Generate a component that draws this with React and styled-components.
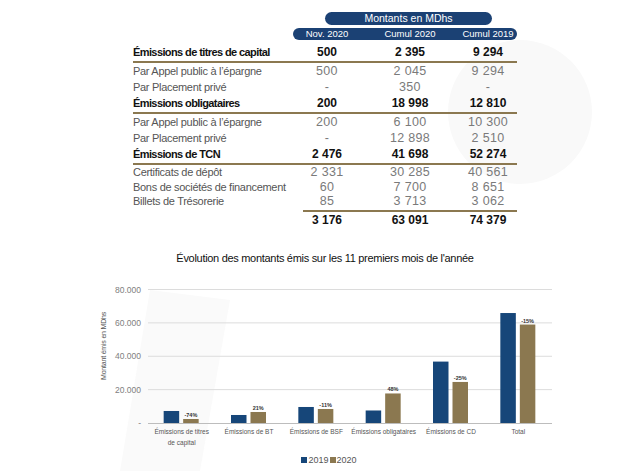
import React from 'react';
import styled, { createGlobalStyle } from 'styled-components';

// Couleurs de la charte
const NAVY = '#1b4174';
const BAR_BLUE = '#164679';
const GOLD = '#8b7850';

const SANS = '"Liberation Sans", Arial, sans-serif';

const GlobalStyle = createGlobalStyle`
  html, body {
    margin: 0;
    padding: 0;
    background: #fff;
  }
  body {
    font-family: ${SANS};
  }
`;

const Page = styled.div`
  position: relative;
  width: 641px;
  height: 471px;
  overflow: hidden;
  background: #fff;
`;

// Filigrane du logo en fond
const Watermark = styled.svg`
  position: absolute;
  left: 0;
  top: 0;
  z-index: 0;
`;

const Content = styled.div`
  position: relative;
  z-index: 1;
  padding-top: 12px;
`;

const TableBlock = styled.div`
  margin-left: 133px;
  width: 384px;
`;

const HeaderTop = styled.div`
  margin-left: 192px;
  width: 167px;
  height: 13px;
  border-radius: 7px;
  background: ${NAVY};
  color: #fff;
  font-size: 10.5px;
  line-height: 13px;
  text-align: center;
`;

const HeaderCols = styled.div`
  margin-top: 3px;
  margin-left: 160px;
  width: 224px;
  height: 12px;
  border-radius: 6px;
  background: ${NAVY};
  display: grid;
  grid-template-columns: 68px 98px 58px;
  color: #fff;
  font-size: 9.5px;
  line-height: 12px;
  text-align: center;
  white-space: nowrap;
`;

const Rows = styled.div`
  margin-top: 4px;
`;

const Row = styled.div`
  display: grid;
  grid-template-columns: 160px 68px 98px 58px;
  height: ${(p) => (p.$compact ? 14.5 : 16)}px;
  line-height: ${(p) => (p.$compact ? 14.5 : 16)}px;
  padding-bottom: ${(p) => (p.$ruled ? 1 : 0)}px;
  border-bottom: ${(p) => (p.$ruled ? `2px solid ${GOLD}` : 'none')};
  white-space: nowrap;
`;

const Label = styled.div`
  font-size: 11px;
  font-weight: ${(p) => (p.$bold ? 700 : 400)};
  letter-spacing: ${(p) => (p.$bold ? -0.6 : -0.3)}px;
  color: ${(p) => (p.$bold ? '#111' : '#555')};
`;

const Value = styled.div`
  text-align: center;
  font-size: ${(p) => (p.$bold ? 12 : 12.5)}px;
  font-weight: ${(p) => (p.$bold ? 700 : 400)};
  letter-spacing: ${(p) => (p.$bold ? 0 : 0.3)}px;
  color: ${(p) => (p.$bold ? '#111' : '#7a7a7a')};
`;

const ValueRule = styled.div`
  margin-left: 170px;
  width: 214px;
  height: 2px;
  margin-top: 1px;
  background: ${GOLD};
`;

const ChartTitle = styled.div`
  margin-top: 23px;
  text-align: center;
  padding-left: 9px;
  font-size: 11px;
  letter-spacing: -0.3px;
  line-height: 14px;
  color: #111;
`;

const ChartSvg = styled.svg`
  display: block;
`;

const Legend = styled.div`
  margin-top: 3px;
  display: flex;
  justify-content: center;
  align-items: center;
  gap: 1px;
  padding-left: 17px;
  font-size: 9px;
  line-height: 12px;
  color: #555;
`;

const Swatch = styled.span`
  display: inline-block;
  width: 6px;
  height: 6px;
  background: ${(p) => p.$color};
`;

const rows = [
  { label: 'Émissions de titres de capital', values: ['500', '2 395', '9 294'], bold: true },
  { label: 'Par Appel public à l’épargne', values: ['500', '2 045', '9 294'] },
  { label: 'Par Placement privé', values: ['-', '350', '-'] },
  { label: 'Émissions obligataires', values: ['200', '18 998', '12 810'], bold: true },
  { label: 'Par Appel public à l’épargne', values: ['200', '6 100', '10 300'] },
  { label: 'Par Placement privé', values: ['-', '12 898', '2 510'] },
  { label: 'Émissions de TCN', values: ['2 476', '41 698', '52 274'], bold: true },
  { label: 'Certificats de dépôt', values: ['2 331', '30 285', '40 561'], compact: true },
  { label: 'Bons de sociétés de financement', values: ['60', '7 700', '8 651'], compact: true },
  { label: 'Billets de Trésorerie', values: ['85', '3 713', '3 062'], compact: true },
];

// Montants en milliers de MDhs lus sur le graphique
const categories = [
  { label: ['Émissions de titres', 'de capital'], y2019: 7.2, y2020: 2.4, pct: '-74%' },
  { label: ['Émissions de BT'], y2019: 4.8, y2020: 6.6, pct: '21%' },
  { label: ['Émissions de BSF'], y2019: 9.6, y2020: 8.4, pct: '-11%' },
  { label: ['Émissions obligataires'], y2019: 7.5, y2020: 17.7, pct: '48%' },
  { label: ['Émissions de CD'], y2019: 36.8, y2020: 24.6, pct: '-25%' },
  { label: ['Total'], y2019: 65.9, y2020: 59.0, pct: '-15%' },
];

const BASE = 158;
const SCALE = 133.5 / 80;
const PLOT_LEFT = 148;
const PLOT_RIGHT = 552;
const STEP = (PLOT_RIGHT - PLOT_LEFT) / categories.length;

function Chart() {
  const ticks = [80, 60, 40, 20];
  return (
    <ChartSvg width="641" height="186" viewBox="0 0 641 186">
      {ticks.map((t) => (
        <g key={t}>
          <line x1={PLOT_LEFT} x2={PLOT_RIGHT} y1={BASE - t * SCALE} y2={BASE - t * SCALE} stroke="#dcdcdc" strokeWidth="1" />
          <text x="141" y={BASE - t * SCALE + 3} textAnchor="end" fontFamily={SANS} fontSize="8.5" fill="#808080">
            {t}.000
          </text>
        </g>
      ))}
      <text x="141" y={BASE + 3} textAnchor="end" fontFamily={SANS} fontSize="8.5" fill="#808080">-</text>
      <text
        transform="translate(106 81) rotate(-90)"
        textAnchor="middle"
        fontFamily={SANS}
        fontSize="7"
        letterSpacing="-0.2"
        fill="#555"
      >
        Montant émis en MDhs
      </text>
      {categories.map((c, i) => {
        const cx = PLOT_LEFT + STEP * (i + 0.5);
        const h1 = c.y2019 * SCALE;
        const h2 = c.y2020 * SCALE;
        return (
          <g key={i}>
            <rect x={cx - 18} y={BASE - h1} width="15.5" height={h1} fill={BAR_BLUE} />
            <rect x={cx + 1.5} y={BASE - h2} width="15.5" height={h2} fill={GOLD} />
            <text x={cx + 9.25} y={BASE - h2 - 2} textAnchor="middle" fontFamily={SANS} fontSize="5.5" fontWeight="700" fill="#333">
              {c.pct}
            </text>
            {c.label.map((l, j) => (
              <text key={j} x={cx} y={BASE + 11 + j * 10.5} textAnchor="middle" fontFamily={SANS} fontSize="6.5" fill="#555">
                {l}
              </text>
            ))}
          </g>
        );
      })}
      <line x1={PLOT_LEFT} x2={PLOT_RIGHT} y1={BASE + 0.5} y2={BASE + 0.5} stroke="#bdbdbd" strokeWidth="1" />
    </ChartSvg>
  );
}

export default function App() {
  return (
    <Page>
      <GlobalStyle />
      <Watermark width="641" height="471" viewBox="0 0 641 471">
        <circle cx="520" cy="112" r="72" fill="#f9f9f9" />
        <polygon points="150,290 230,300 200,471 120,471" fill="#fafafa" />
      </Watermark>
      <Content>
        <TableBlock>
          <HeaderTop>Montants en MDhs</HeaderTop>
          <HeaderCols>
            <span>Nov. 2020</span>
            <span>Cumul 2020</span>
            <span>Cumul 2019</span>
          </HeaderCols>
          <Rows>
            {rows.map((r, i) => (
              <Row key={i} $ruled={r.bold} $compact={r.compact}>
                <Label $bold={r.bold}>{r.label}</Label>
                {r.values.map((v, j) => (
                  <Value key={j} $bold={r.bold}>{v}</Value>
                ))}
              </Row>
            ))}
            <ValueRule />
            <Row>
              <Label />
              <Value $bold>3 176</Value>
              <Value $bold>63 091</Value>
              <Value $bold>74 379</Value>
            </Row>
          </Rows>
        </TableBlock>
        <ChartTitle>Évolution des montants émis sur les 11 premiers mois de l'année</ChartTitle>
        <Chart />
        <Legend>
          <Swatch $color={BAR_BLUE} />
          <span>2019</span>
          <Swatch $color={GOLD} />
          <span>2020</span>
        </Legend>
      </Content>
    </Page>
  );
}
